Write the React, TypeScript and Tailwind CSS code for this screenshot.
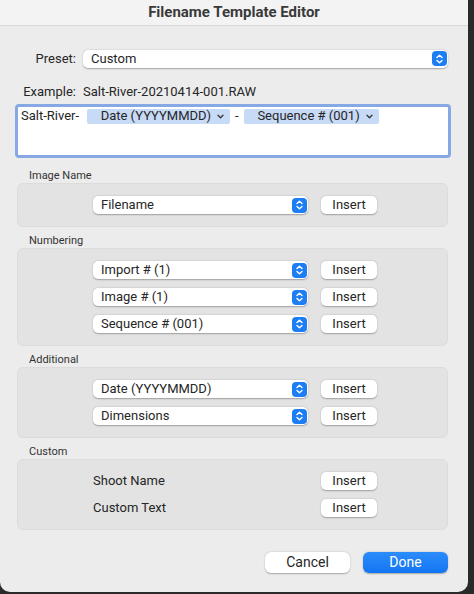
import React from 'react';

const font = { fontFamily: 'Roboto, Inter, "Noto Sans", sans-serif' };

function Stepper() {
  return (
    <span className="flex h-[15px] w-[15px] items-center justify-center rounded-[4px] bg-[#1d7df3]">
      <svg width="7" height="10" viewBox="0 0 7 10" fill="none" stroke="white" strokeWidth="1.4" strokeLinecap="round" strokeLinejoin="round">
        <path d="M1 3.5 L3.5 1.2 L6 3.5" />
        <path d="M1 6.5 L3.5 8.8 L6 6.5" />
      </svg>
    </span>
  );
}

function Select({ label, className = '' }: { label: string; className?: string }) {
  return (
    <div
      className={`flex h-[18px] items-center justify-between rounded-[5px] bg-white pl-[8px] pr-[1.5px] text-[13px] text-[#262626] shadow-[0_0.5px_1.5px_rgba(0,0,0,0.3)] ${className}`}
    >
      <span>{label}</span>
      <Stepper />
    </div>
  );
}

function InsertButton() {
  return (
    <button
      type="button"
      className="flex h-[18px] w-[56px] items-center justify-center rounded-[5px] bg-white text-[13px] text-[#262626] shadow-[0_0.5px_1.5px_rgba(0,0,0,0.3)]"
    >
      Insert
    </button>
  );
}

function Token({ label, className = '' }: { label: string; className?: string }) {
  return (
    <span className={`inline-flex h-[15px] items-center justify-end gap-[6px] rounded-[2px] bg-[#c7daf6] pr-[6px] ${className}`}>
      <span>{label}</span>
      <svg width="7" height="5" viewBox="0 0 7 5" fill="none" stroke="#333" strokeWidth="1.3" strokeLinecap="round" strokeLinejoin="round">
        <path d="M1 1.2 L3.5 3.7 L6 1.2" />
      </svg>
    </span>
  );
}

function Group({ title, children, className = '' }: { title: string; children: React.ReactNode; className?: string }) {
  return (
    <div className={className}>
      <p className="pl-[29px] text-[11px] leading-[14px] text-[#333]">{title}</p>
      <div className="ml-[17px] mr-[20px] flex flex-col gap-[9px] rounded-[6px] border border-[#dcdcdc] bg-[#e3e3e3] py-[12px] pl-[75px]">
        {children}
      </div>
    </div>
  );
}

function Row({ label, select = true }: { label: string; select?: boolean }) {
  return (
    <div className="flex items-center gap-[13px]">
      {select ? (
        <Select label={label} className="w-[215px]" />
      ) : (
        <span className="flex h-[18px] w-[215px] items-center text-[13px] text-[#262626]">{label}</span>
      )}
      <InsertButton />
    </div>
  );
}

export default function App() {
  return (
    <div className="h-[594px] w-[474px] bg-[#2a2a2a]" style={font}>
      <div className="flex h-[592px] w-[468px] flex-col overflow-hidden rounded-b-[10px] bg-[#ececec]">
        <header className="flex h-[26px] shrink-0 items-center justify-center border-b border-[#d8d8d8] bg-[#f3f3f3]">
          <h1 className="text-[15px] font-bold text-[#3a3a3a]">Filename Template Editor</h1>
        </header>

        <div className="mt-[23px] flex items-center pr-[20px]">
          <span className="w-[76px] text-right text-[13px] text-[#262626]">Preset:</span>
          <Select label="Custom" className="ml-[7px] flex-1" />
        </div>

        <div className="mt-[13px] flex items-center text-[13px] text-[#262626]">
          <span className="w-[76px] text-right">Example:</span>
          <span className="ml-[7px]">Salt-River-20210414-001.RAW</span>
        </div>

        <div className="ml-[15px] mr-[17px] mt-[3px] h-[54px] rounded-[4px] border-[3px] border-[#86a9e6] bg-white px-[3px] pt-[1px] text-[13px] leading-[16px] text-[#262626]">
          <div className="flex items-center">
            <span>Salt-River-</span>
            <Token label="Date (YYYYMMDD)" className="ml-[8px] w-[143px]" />
            <span className="mx-[5px]">-</span>
            <Token label="Sequence # (001)" className="w-[135px]" />
          </div>
        </div>

        <Group title="Image Name" className="mt-[11px]">
          <Row label="Filename" />
        </Group>

        <Group title="Numbering" className="mt-[7px]">
          <Row label="Import # (1)" />
          <Row label="Image # (1)" />
          <Row label="Sequence # (001)" />
        </Group>

        <Group title="Additional" className="mt-[7px]">
          <Row label="Date (YYYYMMDD)" />
          <Row label="Dimensions" />
        </Group>

        <Group title="Custom" className="mt-[7px]">
          <Row label="Shoot Name" select={false} />
          <Row label="Custom Text" select={false} />
        </Group>

        <div className="mt-[22px] flex justify-end gap-[13px] pr-[20px]">
          <button
            type="button"
            className="flex h-[21px] w-[85px] items-center justify-center rounded-[6px] bg-white text-[14px] text-[#262626] shadow-[0_0.5px_1.5px_rgba(0,0,0,0.3)]"
          >
            Cancel
          </button>
          <button
            type="button"
            className="flex h-[21px] w-[85px] items-center justify-center rounded-[6px] bg-gradient-to-b from-[#2b8cfb] to-[#1176f2] text-[14px] text-white shadow-[0_0.5px_1.5px_rgba(0,0,0,0.3)]"
          >
            Done
          </button>
        </div>
      </div>
    </div>
  );
}
